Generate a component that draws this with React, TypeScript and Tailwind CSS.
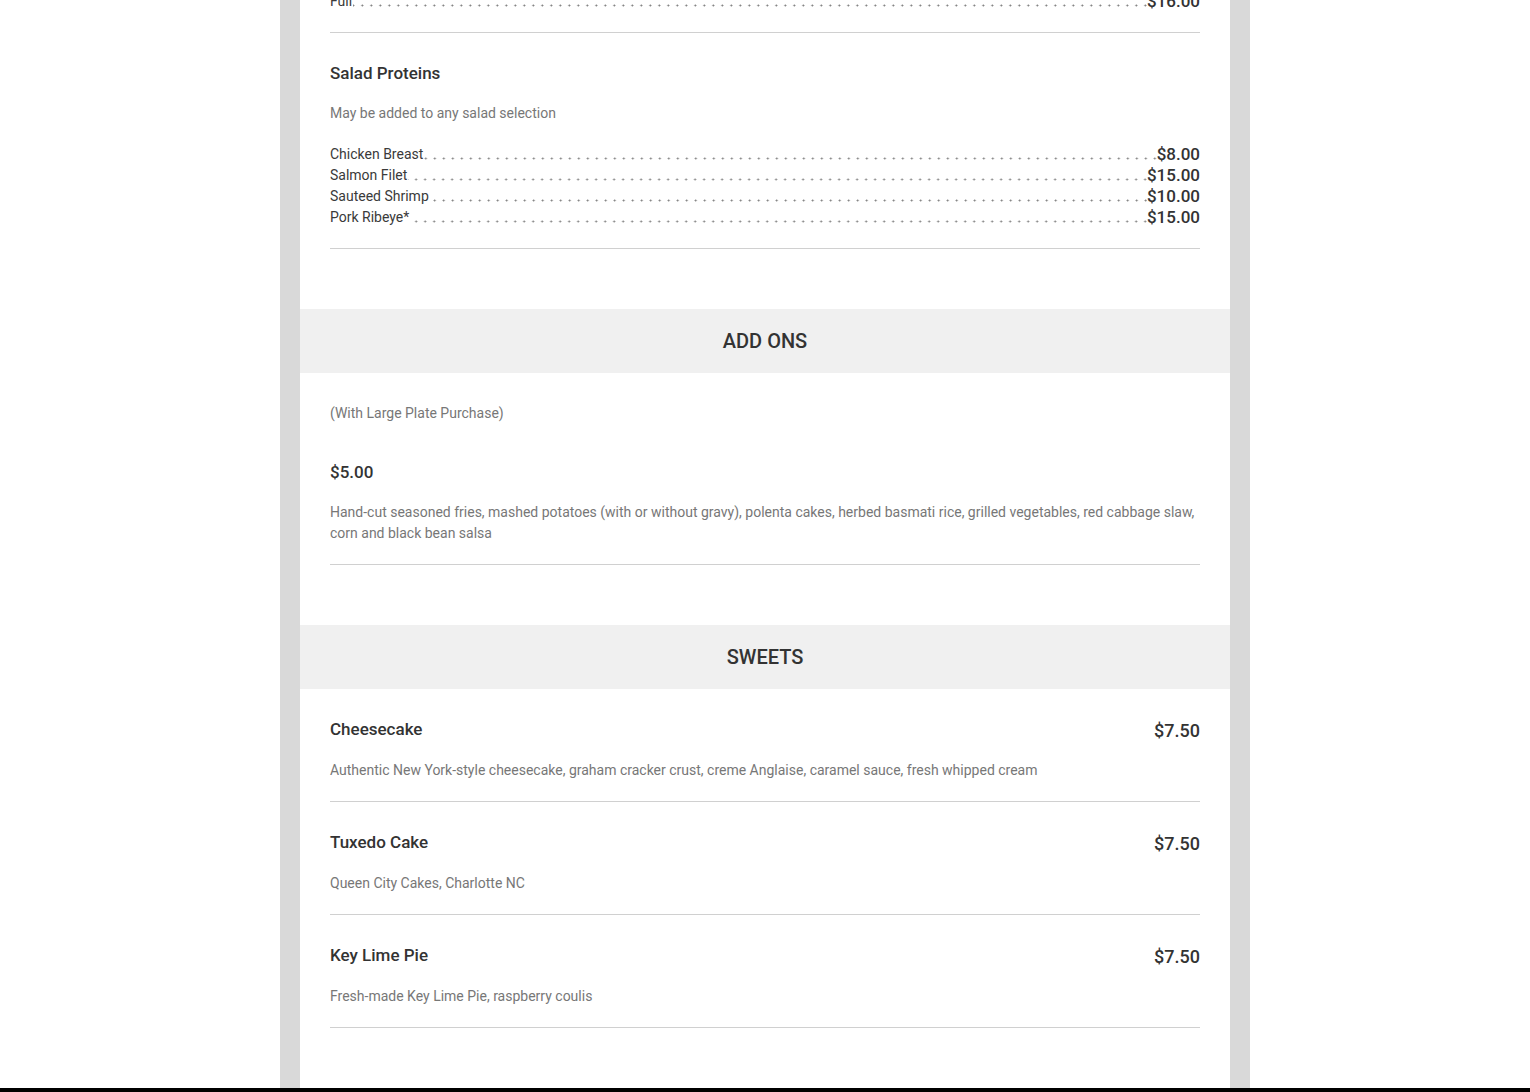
import React from 'react';

type Leader = { name: string; price: string };

const proteins: Leader[] = [
    { name: 'Chicken Breast', price: '$8.00' },
    { name: 'Salmon Filet', price: '$15.00' },
    { name: 'Sauteed Shrimp', price: '$10.00' },
    { name: 'Pork Ribeye*', price: '$15.00' },
];

const sweets = [
    {
        name: 'Cheesecake',
        price: '$7.50',
        desc: 'Authentic New York-style cheesecake, graham cracker crust, creme Anglaise, caramel sauce, fresh whipped cream',
    },
    { name: 'Tuxedo Cake', price: '$7.50', desc: 'Queen City Cakes, Charlotte NC' },
    { name: 'Key Lime Pie', price: '$7.50', desc: 'Fresh-made Key Lime Pie, raspberry coulis' },
];

function LeaderRow({ name, price }: Leader) {
    return (
        <div className="flex items-stretch h-[21px] leading-[21px]">
            <span className="text-[14px] text-[#3a3a3a] whitespace-nowrap">{name}</span>
            {/* dotted leader */}
            <span className="flex-1 ml-[1px] [background-image:radial-gradient(circle,#7a7a7a_0.8px,transparent_1.2px)] [background-size:9px_3px] [background-repeat:repeat-x] [background-position:right_-3px_top_13px]" />
            <span className="text-[17px] font-medium text-[#333] whitespace-nowrap">{price}</span>
        </div>
    );
}

function Band({ title }: { title: string }) {
    return (
        <div className="h-16 bg-[#f0f0f0] flex items-center justify-center">
            <h2 className="text-[20px] font-medium text-[#333] uppercase">{title}</h2>
        </div>
    );
}

export default function App() {
    return (
        <div className="min-h-screen bg-white font-['Roboto','Liberation_Sans',sans-serif] overflow-hidden">
            <div className="w-[970px] mx-auto bg-[#d9d9d9] px-5">
                <div className="bg-white">
                    {/* tail of previous section */}
                    <div className="px-[30px]">
                        <div className="-mt-[9px] pb-5 border-b border-[#d0d0d0]">
                            <LeaderRow name="Full" price="$16.00" />
                        </div>

                        {/* Salad Proteins */}
                        <div className="pt-[28px] pb-5 border-b border-[#d0d0d0]">
                            <h3 className="text-[17px] leading-6 font-medium text-[#333]">Salad Proteins</h3>
                            <p className="mt-[18px] text-[14px] leading-[21px] text-[#777]">
                                May be added to any salad selection
                            </p>
                            <div className="mt-5">
                                {proteins.map((p) => (
                                    <LeaderRow key={p.name} {...p} />
                                ))}
                            </div>
                        </div>
                    </div>

                    {/* Add ons */}
                    <div className="mt-[60px]">
                        <Band title="Add Ons" />
                        <div className="px-[30px]">
                            <div className="pt-[30px] pb-5 border-b border-[#d0d0d0]">
                                <p className="text-[14px] leading-[21px] text-[#777]">(With Large Plate Purchase)</p>
                                <div className="mt-9 text-[17px] leading-6 font-medium text-[#333]">$5.00</div>
                                <p className="mt-[18px] text-[14px] leading-[21px] text-[#777]">
                                    Hand-cut seasoned fries, mashed potatoes (with or without gravy), polenta cakes, herbed basmati rice, grilled vegetables, red cabbage slaw, corn and black bean salsa
                                </p>
                            </div>
                        </div>
                    </div>

                    {/* Sweets */}
                    <div className="mt-[60px]">
                        <Band title="Sweets" />
                        <div className="px-[30px]">
                            {sweets.map((s) => (
                                <div key={s.name} className="pt-[29px] pb-5 border-b border-[#d0d0d0]">
                                    <div className="flex items-center justify-between h-6">
                                        <h3 className="text-[17px] font-medium text-[#333]">{s.name}</h3>
                                        <span className="text-[18px] font-medium text-[#333]">{s.price}</span>
                                    </div>
                                    <p className="mt-[18px] text-[14px] leading-[21px] text-[#777]">{s.desc}</p>
                                </div>
                            ))}
                        </div>
                    </div>
                    <div className="h-[60px]" />
                </div>
            </div>
            <footer className="h-[200px] bg-black" />
        </div>
    );
}
